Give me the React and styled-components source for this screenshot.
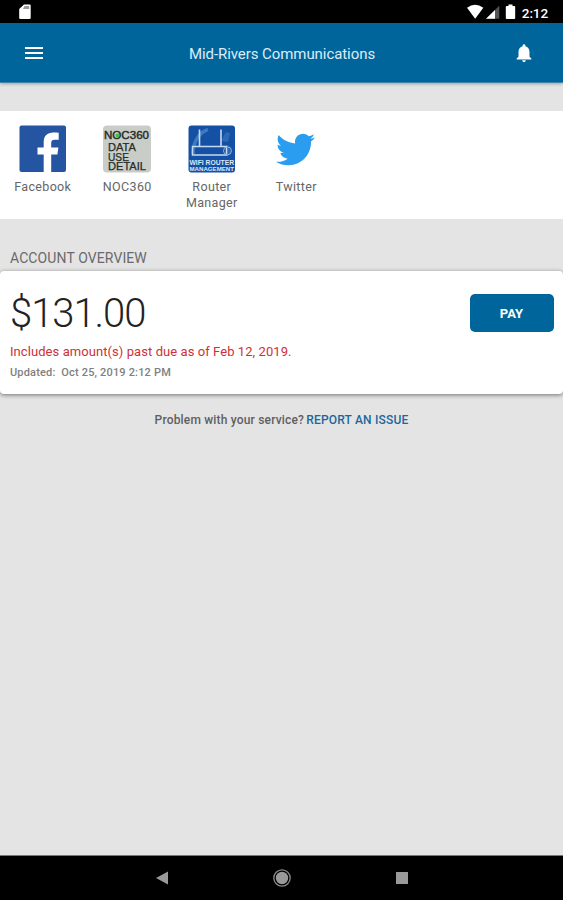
import React from "react";
import styled, { createGlobalStyle } from "styled-components";
import { FaTwitter } from "react-icons/fa";
import { MdNotifications } from "react-icons/md";

const GlobalStyle = createGlobalStyle`
  * {
    box-sizing: border-box;
  }
  body {
    margin: 0;
    background-color: #e4e4e4;
    font-family: Roboto, "Liberation Sans", sans-serif;
  }
`;

const Screen = styled.div`
  display: flex;
  flex-direction: column;
  width: 100%;
  height: 900px;
  overflow: hidden;
  background-color: #e4e4e4;
`;

const StatusBar = styled.div`
  display: flex;
  flex: none;
  align-items: center;
  justify-content: space-between;
  height: 23px;
  padding: 0 15px 0 19px;
  background-color: black;
`;
const StatusIcons = styled.div`
  display: flex;
  align-items: center;
`;
const Clock = styled.span`
  margin-left: 5px;
  padding-top: 2px;
  font-size: 13.5px;
  font-weight: 500;
  line-height: 16px;
  letter-spacing: -0.1px;
  color: white;
`;

const AppBar = styled.header`
  display: grid;
  grid-template-columns: 24px 1fr 24px;
  flex: none;
  align-items: center;
  height: 60px;
  padding: 0 27px 0 22px;
  background-color: #00659b;
  border-bottom: 1px solid #3f83aa;
  box-shadow: 0 1px 3px rgba(0, 0, 0, 0.3);
`;
const Title = styled.h1`
  margin: 0;
  padding: 2px 0 0 6px;
  text-align: center;
  font-size: 15px;
  font-weight: 400;
  letter-spacing: -0.07px;
  color: #dcecf6;
`;
const MenuButton = styled.div`
  display: flex;
  flex-direction: column;
  gap: 3px;
  width: 18px;
  margin-left: 3px;
`;
const MenuLine = styled.span`
  height: 2px;
  background-color: white;
`;
const Bell = styled(MdNotifications)`
  width: 22px;
  height: 22px;
  margin-left: 1px;
  color: white;
`;

const Links = styled.nav`
  display: flex;
  flex: none;
  height: 108px;
  margin-top: 28px;
  padding-top: 14px;
  background-color: white;
`;
const LinkItem = styled.div`
  display: flex;
  flex-direction: column;
  align-items: center;
  width: 84.5px;
  padding-left: 1px;
`;
const LinkLabel = styled.span`
  width: 64px;
  margin-top: 6px;
  text-align: center;
  font-size: 12.5px;
  line-height: 15.5px;
  letter-spacing: 0.35px;
  color: #666;
`;
const Tile = styled.svg`
  display: block;
  width: 48px;
  height: 48px;
`;
const TwitterBox = styled.div`
  display: flex;
  align-items: center;
  justify-content: center;
  width: 48px;
  height: 48px;
  padding-right: 2px;
  color: #2a9df0;
`;

const SectionTitle = styled.h2`
  flex: none;
  height: 52px;
  margin: 0;
  padding: 30px 0 0 10px;
  font-size: 14px;
  font-weight: 400;
  line-height: 18px;
  letter-spacing: 0.1px;
  color: #6a6a6a;
`;
const Card = styled.section`
  display: flex;
  flex: none;
  justify-content: space-between;
  height: 123px;
  padding: 23px 9.5px 0 10px;
  border-radius: 4px;
  background-color: white;
  box-shadow: 0 1px 4px rgba(0, 0, 0, 0.5);
`;
const Amount = styled.div`
  padding-top: 1px;
  font-size: 40px;
  font-weight: 300;
  line-height: 38px;
  letter-spacing: -1.05px;
  color: #222;
`;
const PastDue = styled.div`
  margin-top: 11px;
  font-size: 13px;
  line-height: 16px;
  letter-spacing: 0.07px;
  color: #cf3038;
`;
const Updated = styled.div`
  margin-top: 6px;
  font-size: 11px;
  font-weight: 500;
  line-height: 14px;
  letter-spacing: 0.17px;
  color: #808080;
  white-space: pre;
`;
const PayButton = styled.button`
  width: 84px;
  height: 38px;
  padding: 1px 0 0;
  border: none;
  border-radius: 5px;
  background-color: #00659b;
  font-family: inherit;
  font-size: 13px;
  font-weight: 700;
  color: white;
`;

const Issue = styled.p`
  flex: 1;
  margin: 0;
  padding-top: 18px;
  text-align: center;
  font-size: 12px;
  font-weight: 500;
  line-height: 16px;
  letter-spacing: 0.18px;
  color: #5f5f5f;
`;
const IssueLink = styled.span`
  margin-left: -1px;
  color: #1c689b;
`;

const NavBar = styled.footer`
  display: flex;
  flex: none;
  align-items: center;
  justify-content: center;
  gap: 100px;
  height: 45px;
  border-top: 1px solid #777;
  background-color: black;
`;
const NavIcon = styled.svg`
  width: 20px;
  height: 20px;
`;

function FacebookTile() {
  return (
    <Tile viewBox="0 0 48 48">
      <rect x="0.5" y="0.5" width="46.5" height="46.5" rx="2" fill="#2555a0" />
      <path
        d="M32.2 47V29.5h6.2l1-7h-7.2v-4.4c0-2.1.8-3.3 3.6-3.3h3.9V7.7c-.7-.1-3-.3-5.6-.3-5.8 0-9.4 3.4-9.4 9.6v5.5h-6.2v7h6.2V47z"
        fill="white"
      />
    </Tile>
  );
}

function NocTile() {
  return (
    <Tile viewBox="0 0 48 48" fontFamily="Liberation Sans, sans-serif" fill="#262c28">
      <rect x="0" y="0.5" width="48" height="47" rx="4" fill="#c8cdc7" />
      <text x="1" y="14" fontSize="10.5" stroke="#262c28" strokeWidth="0.4" textLength="45" lengthAdjust="spacingAndGlyphs">NOC360</text>
      <circle cx="14.5" cy="10.5" r="2" fill="#52b84a" />
      <g fontSize="10.3" stroke="#262c28" strokeWidth="0.25">
        <text x="5" y="26.4" textLength="28" lengthAdjust="spacingAndGlyphs">DATA</text>
        <text x="5" y="35.5" textLength="21" lengthAdjust="spacingAndGlyphs">USE</text>
        <text x="5" y="44.6" textLength="38" lengthAdjust="spacingAndGlyphs">DETAIL</text>
      </g>
    </Tile>
  );
}

function RouterTile() {
  return (
    <Tile viewBox="0 0 48 48">
      <rect x="0.5" y="0.5" width="46.5" height="47" rx="3" fill="#1450a3" />
      <path d="M20 4.5C12 7 5 16 5 29" fill="none" stroke="#3b79c2" strokeWidth="3.5" />
      <path d="M33 16l5-9 4 1-2 9zM38 20c6 0 7 9 1 12" fill="#2c69b5" />
      <g fill="none" stroke="#c7d9f0">
        <path d="M11.5 4.5V21M33 4.5V21" strokeWidth="1.6" />
        <rect x="4.5" y="21.5" width="34" height="8.5" strokeWidth="1.5" />
        <circle cx="39.5" cy="25.8" r="4" strokeWidth="1" stroke="#8db3e0" />
      </g>
      <g fontFamily="Liberation Sans, sans-serif" fontWeight="700" fill="#d9e7f7">
        <text x="1.5" y="39.7" fontSize="7" textLength="44.5" lengthAdjust="spacingAndGlyphs">WIFI ROUTER</text>
        <text x="1.5" y="46" fontSize="6" textLength="44.5" lengthAdjust="spacingAndGlyphs">MANAGEMENT</text>
      </g>
    </Tile>
  );
}

const links = [
  { label: "Facebook", icon: <FacebookTile /> },
  { label: "NOC360", icon: <NocTile /> },
  { label: "Router Manager", icon: <RouterTile /> },
  { label: "Twitter", icon: <TwitterBox><FaTwitter size={39} /></TwitterBox> },
];

function App() {
  return (
    <>
      <GlobalStyle />
      <Screen>
        <StatusBar>
          <svg width="12" height="16" viewBox="0 0 12 16">
            <path d="M5 .5h5.5q1.2 0 1.2 1.2v12.1q0 1.2-1.2 1.2H1.3Q.2 15 .2 13.8V5z" fill="white" />
            <path d="M5.5 2h4.7v3H4z" fill="#9b9b9b" />
          </svg>
          <StatusIcons>
            <svg width="50" height="16" viewBox="0 0 50 16">
              <path d="M0 3.8Q8-2.2 16.3 3.8L8.2 14.8z" fill="white" />
              <path d="M32.3 1.7v13H19z" fill="#555" />
              <path d="M28 6v8.7h-9z" fill="white" />
              <path d="M41.5.5h4v1.4h1.8q.9 0 .9.9v11.3q0 .9-.9.9h-7.6q-.9 0-.9-.9V2.8q0-.9.9-.9h1.8z" fill="white" />
            </svg>
            <Clock>2:12</Clock>
          </StatusIcons>
        </StatusBar>
        <AppBar>
          <MenuButton>
            <MenuLine />
            <MenuLine />
            <MenuLine />
          </MenuButton>
          <Title>Mid-Rivers Communications</Title>
          <Bell />
        </AppBar>
        <Links>
          {links.map((link) => (
            <LinkItem key={link.label}>
              {link.icon}
              <LinkLabel>{link.label}</LinkLabel>
            </LinkItem>
          ))}
        </Links>
        <SectionTitle>ACCOUNT OVERVIEW</SectionTitle>
        <Card>
          <div>
            <Amount>$131.00</Amount>
            <PastDue>Includes amount(s) past due as of Feb 12, 2019.</PastDue>
            <Updated>Updated:  Oct 25, 2019 2:12 PM</Updated>
          </div>
          <PayButton>PAY</PayButton>
        </Card>
        <Issue>
          Problem with your service? <IssueLink>REPORT AN ISSUE</IssueLink>
        </Issue>
        <NavBar>
          <NavIcon viewBox="0 0 20 20">
            <path d="M4 10L16 3.5v13z" fill="#999" />
          </NavIcon>
          <NavIcon viewBox="0 0 20 20">
            <circle cx="10" cy="10" r="8.2" fill="none" stroke="#8a8a8a" strokeWidth="1.3" />
            <circle cx="10" cy="10" r="6.2" fill="#999" />
          </NavIcon>
          <NavIcon viewBox="0 0 20 20">
            <rect x="4" y="4" width="12" height="12" fill="#999" />
          </NavIcon>
        </NavBar>
      </Screen>
    </>
  );
}

export default App;
